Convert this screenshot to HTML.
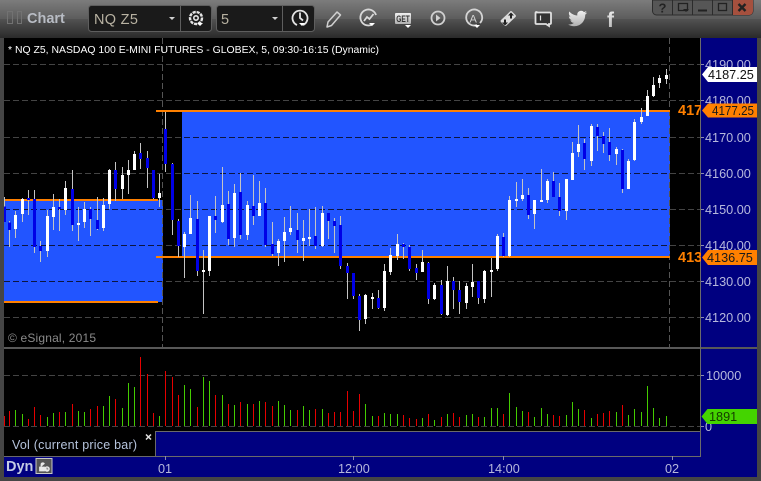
<!DOCTYPE html>
<html><head><meta charset="utf-8"><style>
html,body{margin:0;padding:0;background:#333;width:761px;height:481px;overflow:hidden}
svg{display:block}
text{font-family:"Liberation Sans",sans-serif}
.a{fill:#b6b8dc;font-size:12.7px}
</style></head><body>
<svg width="761" height="481" viewBox="0 0 761 481" xmlns="http://www.w3.org/2000/svg">
<defs>
<linearGradient id="t1" x1="0" y1="0" x2="0" y2="1"><stop offset="0" stop-color="#7c7c7c"/><stop offset="1" stop-color="#5c5c5c"/></linearGradient>
<linearGradient id="t2" x1="0" y1="0" x2="0" y2="1"><stop offset="0" stop-color="#525252"/><stop offset="1" stop-color="#2a2a2a"/></linearGradient>
<linearGradient id="ic" x1="0" y1="0" x2="0" y2="1"><stop offset="0" stop-color="#f0f0f0"/><stop offset="1" stop-color="#b0b0b0"/></linearGradient>
<clipPath id="c1"><rect x="670" y="38" width="31" height="310"/></clipPath>
<clipPath id="c2"><rect x="4" y="200" width="159" height="102"/><rect x="182" y="111" width="488" height="146"/></clipPath>
</defs>
<rect width="761" height="481" fill="#454545"/>
<rect width="761" height="19" fill="url(#t1)"/>
<rect y="19" width="761" height="19" fill="url(#t2)"/>

<!-- title -->
<g fill="none" stroke="#727272"><rect x="7.5" y="11.5" width="5" height="12"/><rect x="17.5" y="11.5" width="4" height="12"/></g>
<text x="27" y="23" font-size="14.5" font-weight="bold" fill="#b8bcc4">Chart</text>

<!-- combos -->
<g fill="#1a1a1a" stroke="#5e5e5e"><rect x="88.5" y="5.5" width="123" height="26" rx="3"/><rect x="216.5" y="5.5" width="98" height="26" rx="3"/></g>
<path d="M180.5 6V31M282.5 6V31" stroke="#5e5e5e"/>
<text x="94" y="24" font-size="14.5" fill="#b8b2a2" letter-spacing=".3">NQ Z5</text>
<text x="221" y="24" font-size="14.5" fill="#b8b2a2">5</text>
<path d="M169 17h6l-3 3zM272 17h6l-3 3z" fill="#d0d0d0"/>

<!-- gear icon -->
<g fill="none" stroke="#e4e4e4"><circle cx="196" cy="18" r="6" stroke-width="2.4" stroke-dasharray="3.2 .9"/><circle cx="196" cy="18" r="2.2" stroke-width="1.6"/></g>
<path d="M197 23h6l-3 3z" fill="#fff"/>
<!-- clock icon -->
<g fill="none" stroke="#e4e4e4" stroke-width="1.8"><path d="M303 25a7.5 7.5 0 1 0-6 0"/><path d="M300 12.5V18l3 2.5"/></g>
<path d="M299 23h6l-3 3z" fill="#fff"/>
<!-- pencil -->
<path d="M337 12l3.5 3-9 10.5-4.5 1.5 1-5z" fill="none" stroke="#cfcfcf" stroke-width="1.5" stroke-linejoin="round"/>
<!-- swirl circle -->
<g fill="none" stroke="#d8d8d8" stroke-width="1.8"><path d="M376 15a8 8 0 1 0-3 9"/><path d="M364 21l3-4 2.5 2 4-5"/></g>
<path d="M369 23h6l-3 3z" fill="#fff"/>
<!-- GET -->
<rect x="395" y="13" width="16" height="11" rx="1" fill="url(#ic)"/>
<text x="396.3" y="22" font-size="8.8" font-weight="bold" fill="#333" textLength="13.5" lengthAdjust="spacingAndGlyphs">GET</text>
<path d="M405 25h6l-3 3z" fill="#fff"/>
<!-- play -->
<circle cx="438" cy="18" r="6.5" fill="none" stroke="#d0d0d0" stroke-width="1.8"/><path d="M436 14.5v7l4.5-3.5z" fill="#d0d0d0"/>
<!-- A -->
<path d="M480 23a8 8 0 1 0-3 2" fill="none" stroke="#d4d4d4" stroke-width="1.8"/>
<text x="469.5" y="22.5" font-size="11" fill="#d4d4d4">A</text>
<path d="M474 25h6l-3 3z" fill="#fff"/>
<!-- tag arrows -->
<path d="M501 20l9-8.500a1.500 1.500 0 0 1 2 0l3.500 3.500a1.500 1.500 0 0 1 0 2l-9 8.500a1.500 1.500 0 0 1-2 0l-3.500-3.500a1.500 1.500 0 0 1 0-2z" fill="#dcdcdc"/>
<path d="M511 12.500l3 3h-2v3h-2v-3h-2zM505 25.500l-3-3h2v-3h2v3h2z" fill="#222"/>
<!-- comment -->
<path d="M536.5 12.500h13.500a1 1 0 0 1 1 1v9.500a1 1 0 0 1-1 1h-1v2l-3-2h-9.500a1 1 0 0 1-1-1v-10a1 1 0 0 1 1-1z" fill="#333" stroke="#e0e0e0" stroke-width="1.8"/>
<path d="M540.5 15.500v5" stroke="#e0e0e0" stroke-width="1.2"/>
<!-- twitter -->
<path d="M586 13.500c-.8.400-1.500.600-2.300.700.8-.5 1.400-1.200 1.700-2.100-.8.400-1.600.800-2.500.900a3.900 3.900 0 0 0-6.600 3.500c-3.200-.2-6-1.700-7.900-4-.4.600-.5 1.300-.5 2 0 1.300.7 2.500 1.700 3.200-.6 0-1.200-.2-1.700-.5 0 1.900 1.300 3.500 3.100 3.900-.6.200-1.200.2-1.700.1.500 1.500 1.900 2.600 3.600 2.700-1.600 1.200-3.500 1.800-5.700 1.600 1.700 1.100 3.800 1.700 5.900 1.700 7.200 0 11.300-6 11.100-11.500.8-.6 1.400-1.300 1.800-2.200z" fill="url(#ic)" transform="translate(1 -1)"/>
<!-- f -->
<text x="607" y="27" font-size="21" font-weight="bold" fill="url(#ic)">f</text>

<!-- window buttons -->
<path d="M652.5 0V11a4 4 0 0 0 4 4H749a4 4 0 0 0 4-4V0z" fill="#565656" stroke="#2c2c2c"/>
<path d="M733 0h20v11a4 4 0 0 1-4 4h-16z" fill="#a5503e"/>
<path d="M672.5 0v15M692.5 0v15M712.500 0v15M732.500 0v15" stroke="#2c2c2c"/>
<text x="658.5" y="12.5" font-size="13" font-weight="bold" fill="#222">?</text>
<path d="M678.5 3.500h9v7h-9z" fill="none" stroke="#222" stroke-width="1.3"/><path d="M683 9h6l-3 3z" fill="#222"/>
<path d="M698 9.500h9v2h-9z" fill="#222"/>
<rect x="718.5" y="3.500" width="8" height="7" fill="none" stroke="#222" stroke-width="1.3"/>
<path d="M738.5 4l7 7M745.5 4l-7 7" stroke="#222" stroke-width="2.4"/>

<!-- chart panes -->
<rect x="4" y="38" width="697" height="310" fill="#000"/>
<rect x="701" y="38" width="56" height="439" fill="#000080"/>
<rect x="4" y="349" width="697" height="82" fill="#000"/>
<rect x="4" y="431" width="151" height="25" fill="#000"/>
<rect x="156" y="432" width="545" height="24" fill="#000080"/>
<rect x="4" y="457" width="753" height="20" fill="#000080"/>

<!-- value areas -->
<rect x="4" y="200" width="159" height="102" fill="#2255ff"/>
<rect x="182" y="111" width="488" height="146" fill="#2255ff"/>

<!-- grid -->
<g stroke="#444" stroke-dasharray="6 3" shape-rendering="crispEdges">
<path d="M4 64.5H701M4 100.5H701M4 137.5H701M4 173.5H701M4 209.5H701M4 245.5H701M4 281.5H701M4 317.5H701M4 375.5H701M4 426.5H701"/>
<path d="M4 137.5H701M4 173.5H701M4 209.5H701M4 245.5H701M4 281.5H701" stroke="#0c1540" clip-path="url(#c2)"/>
<path d="M162.5 38V348M669.5 38V348" stroke="#555"/>
</g>

<!-- orange lines -->
<g fill="#ff8000"><rect x="4" y="199" width="154" height="2"/><rect x="4" y="301" width="154" height="2"/><rect x="156" y="110" width="514" height="2"/><rect x="156" y="256" width="514" height="2"/></g>

<!-- candles group 1 -->
<g transform="translate(0 100) scale(.33333)" fill="none" shape-rendering="crispEdges">
<path stroke="#c4c4c4" stroke-width="3" d="M13 291V320M28 363V441M46 333V414M67 294V366M85 270V345M103 270V459M121 423V486M142 330V471M160 282V390M178 297V393M196 243V345M217 210V393M235 321V423M253 306V384M271 321V408M292 291V390M310 294V393M328 207V327M346 186V303M367 201V297M385 180V282M403 153V210M421 129V207M442 153V264M460 210V297M478 222V321M496 36V216M517 189V405M535 357V471M553 396V534M571 285V402M592 303V528M610 450V642M628 348V528M646 288V399M667 201V369M685 273V435M703 252V441M721 219V417M742 303V420"/>
<path stroke="#0000e6" stroke-width="9" d="M13 320V366M28 368V390M85 294V300M103 297V441M121 438V453M178 321V327M217 267V375M271 327V357M292 360V387M346 210V267M421 159V177M442 174V204M460 210V294M496 87V192M517 192V360M535 363V438M592 357V513M646 348V360M685 312V417M721 276V405"/>
<path stroke="#fff" stroke-width="9" d="M46 345V387M67 297V342M142 348V453M160 321V351M196 264V330M235 369V375M253 327V366M310 315V384M328 210V312M367 225V267M385 210V225M403 162V210M478 279V294M553 402V441M571 354V402M610 510V516M628 348V513M667 315V366M703 279V414M742 315V405"/>
</g>
<!-- candles group 2 -->
<g transform="translate(250 100) scale(.33333)" fill="none" shape-rendering="crispEdges">
<path stroke="#c4c4c4" stroke-width="3" d="M10 225V375M28 243V348M46 264V441M67 366V468M85 417V498M103 351V486M121 318V405M142 339V459M160 360V483M178 327V438M196 321V447M217 318V441M235 339V417M253 354V459M271 348V507M292 489V597M310 519V597M328 582V693M346 582V672M367 579V627M385 570V627M403 492V633M421 444V525M442 402V480M460 429V477M478 435V513M499 492V540M517 450V516M535 486V612M553 549V600M574 540V645M592 498V648M610 531V627M628 543V642M649 549V627M667 492V591M685 543V612M703 510V609M724 474V591M742 402V513"/>
<path stroke="#0000e6" stroke-width="9" d="M10 318V348M46 309V435M67 432V462M142 390V420M196 408V438M235 339V363M253 363V378M271 375V498M292 498V519M310 519V588M328 588V660M385 594V624M460 432V441M478 441V507M499 504V519M535 489V597M574 555V642M610 543V570M628 570V606M685 543V594"/>
<path stroke="#fff" stroke-width="9" d="M28 309V348M85 423V459M103 396V423M121 384V396M160 414V423M178 411V417M217 339V438M346 585V657M367 591V597M403 513V624M421 465V516M442 432V468M517 486V516M553 555V597M592 543V645M649 558V609M667 546V561M703 513V597M724 510V516M742 408V507"/>
</g>
<!-- candles group 3 -->
<g transform="translate(500 60) scale(.33333)" fill="none" shape-rendering="crispEdges">
<path stroke="#c4c4c4" stroke-width="3" d="M10 519V591M28 408V591M49 366V441M67 357V423M85 384V477M103 420V507M124 327V426M142 357V429M160 336V411M178 369V468M199 357V480M217 246V360M235 195V291M253 237V330M274 192V318M292 192V273M310 216V279M328 204V303M349 261V315M367 267V399M385 297V387M403 177V303M424 144V192M442 90V168M460 51V111M478 45V84M499 27V72"/>
<path stroke="#0000e6" stroke-width="9" d="M10 531V588M85 405V465M160 363V411M178 411V453M253 249V297M292 201V228M310 228V252M328 246V285M367 270V387"/>
<path stroke="#fff" stroke-width="9" d="M28 420V588M49 417V423M67 405V417M103 420V462M124 420V426M142 363V420M199 357V453M217 279V360M235 252V276M274 198V303M349 267V282M385 303V387M403 186V300M424 171V186M442 108V168M460 75V108M478 54V69M499 45V57"/>
</g>

<!-- volume -->
<g transform="translate(0 345) scale(.33333)" fill="none" stroke-width="3" shape-rendering="crispEdges">
<path stroke="#e60000" d="M13 213V243M28 198V243M85 222V243M103 186V243M121 210V243M178 201V243M217 177V243M271 192V243M292 183V243M346 162V243M421 36V243M442 87V243M460 204V243M496 78V243M517 96V243M535 150V243M592 186V243M646 150V243M685 177V243M721 171V243M760 177V243M796 171V243M817 183V243M892 195V243M946 192V243M985 204V243M1003 201V243M1021 201V243M1042 138V243M1060 198V243M1078 147V243M1135 213V243"/>
<path stroke="#44cc00" d="M46 195V243M67 207V243M142 216V243M160 204V243M196 201V243M235 198V243M253 201V243M310 183V243M328 153V243M367 189V243M385 114V243M403 126V243M478 213V243M553 120V243M571 132V243M610 96V243M628 108V243M667 150V243M703 180V243M742 177V243M778 168V243M835 168V243M853 180V243M871 195V243M910 183V243M928 195V243M967 192V243M1096 177V243M1117 213V243"/>
</g>
<g transform="translate(380 345) scale(.33333)" fill="none" stroke-width="3" shape-rendering="crispEdges">
<path stroke="#e60000" d="M70 210V243M88 219V243M109 222V243M145 207V243M184 216V243M220 204V243M238 216V243M295 216V243M370 207V243M445 201V243M520 210V243M538 213V243M613 195V243M652 207V243M670 204V243M688 198V243M727 180V243"/>
<path stroke="#44cc00" d="M13 204V243M31 207V243M52 207V243M127 219V243M163 225V243M202 207V243M259 210V243M277 207V243M313 216V243M334 189V243M352 189V243M388 144V243M409 186V243M427 198V243M463 216V243M484 189V243M502 207V243M559 210V243M577 171V243M595 192V243M634 219V243M709 201V243M745 210V243M763 192V243M784 201V243M802 123V243M820 189V243M838 219V243M859 213V243"/>
</g>

<!-- separators -->
<g shape-rendering="crispEdges">
<rect x="4" y="347" width="753" height="2" fill="#585858"/>
<path d="M155.5 431V456M155 431.5H701M4 456.5H701M700.5 38V457" stroke="#6a6a6a" fill="none"/>
<path d="M701 64.5h3M701 100.5h3M701 137.5h3M701 173.5h3M701 209.5h3M701 245.5h3M701 281.5h3M701 317.5h3M701 375.5h3M701 426.5h3M165.5 456v4M353.5 456v4M503.5 456v4M672.5 456v4" stroke="#8a8ab0"/>
</g>

<!-- header & watermark -->
<text x="8" y="53" font-size="9.8" fill="#fff" textLength="371" lengthAdjust="spacingAndGlyphs">* NQ Z5, NASDAQ 100 E-MINI FUTURES - GLOBEX, 5, 09:30-16:15 (Dynamic)</text>
<text x="8" y="342" font-size="12" fill="#8a8a8a" textLength="88">© eSignal, 2015</text>

<!-- axis labels -->
<text class="a" x="705" y="69">4190.00</text>
<text class="a" x="705" y="105">4180.00</text>
<text class="a" x="705" y="142">4170.00</text>
<text class="a" x="705" y="178">4160.00</text>
<text class="a" x="705" y="214">4150.00</text>
<text class="a" x="705" y="250">4140.00</text>
<text class="a" x="705" y="286">4130.00</text>
<text class="a" x="705" y="322">4120.00</text>
<text class="a" x="706" y="380">10000</text>
<text class="a" x="705" y="431">0</text>
<text class="a" x="158" y="473">01</text>
<text class="a" x="338" y="473">12:00</text>
<text class="a" x="488" y="473">14:00</text>
<text class="a" x="665" y="473">02</text>

<!-- level labels -->
<g clip-path="url(#c1)" font-size="14.5" font-weight="bold" fill="#ff8000"><text x="678" y="115">4177.25</text><text x="678" y="262">4136.75</text></g>

<!-- tags -->
<path d="M702 74.5l6-7.500h49v15h-49z" fill="#fff"/>
<text x="708" y="79" font-size="12.7" fill="#111">4187.25</text>
<path d="M702 110.5l6-7h49v14h-49z" fill="#ff8000"/>
<text x="712" y="115" font-size="12.7" fill="#1a1a1a" textLength="42" lengthAdjust="spacingAndGlyphs">4177.25</text>
<path d="M702 257.5l6-7.500h49v15h-49z" fill="#ff8000"/>
<text x="707" y="262" font-size="12.7" fill="#1a1a1a">4136.75</text>
<path d="M701.5 416.5l6-7.500h49.500v15h-49.500z" fill="#44d400"/>
<text x="709" y="421" font-size="12.7" fill="#143a00">1891</text>

<!-- vol label -->
<text x="12" y="449" font-size="12.5" fill="#b6c4dc" textLength="125">Vol (current price bar)</text>
<path d="M146 434.5l5 5M151 434.5l-5 5" stroke="#e0e0e0" stroke-width="1.5"/>

<!-- Dyn -->
<text x="6" y="471" font-size="14.5" font-weight="bold" fill="#c4cce4">Dyn</text>
<rect x="36" y="458.5" width="16" height="15" fill="#555" stroke="#c8c8c8"/>
<path d="M39.5 471v-4h5v4zM41 467v-2.5a1.800 1.800 0 0 1 3.500-.5" fill="#e8e8e8" stroke="#e8e8e8" stroke-width=".8"/>
<circle cx="47" cy="469" r="2.8" fill="#e8e8e8"/>
<path d="M47 467.5V469h1.3" stroke="#555" fill="none" stroke-width=".7"/>

<!-- outer edge -->
<rect x="0" y="38" width="4" height="443" fill="#454545"/>
<rect x="757" y="38" width="4" height="443" fill="#454545"/>
<rect x="0" y="477" width="761" height="4" fill="#454545"/>
</svg>
</body></html>
